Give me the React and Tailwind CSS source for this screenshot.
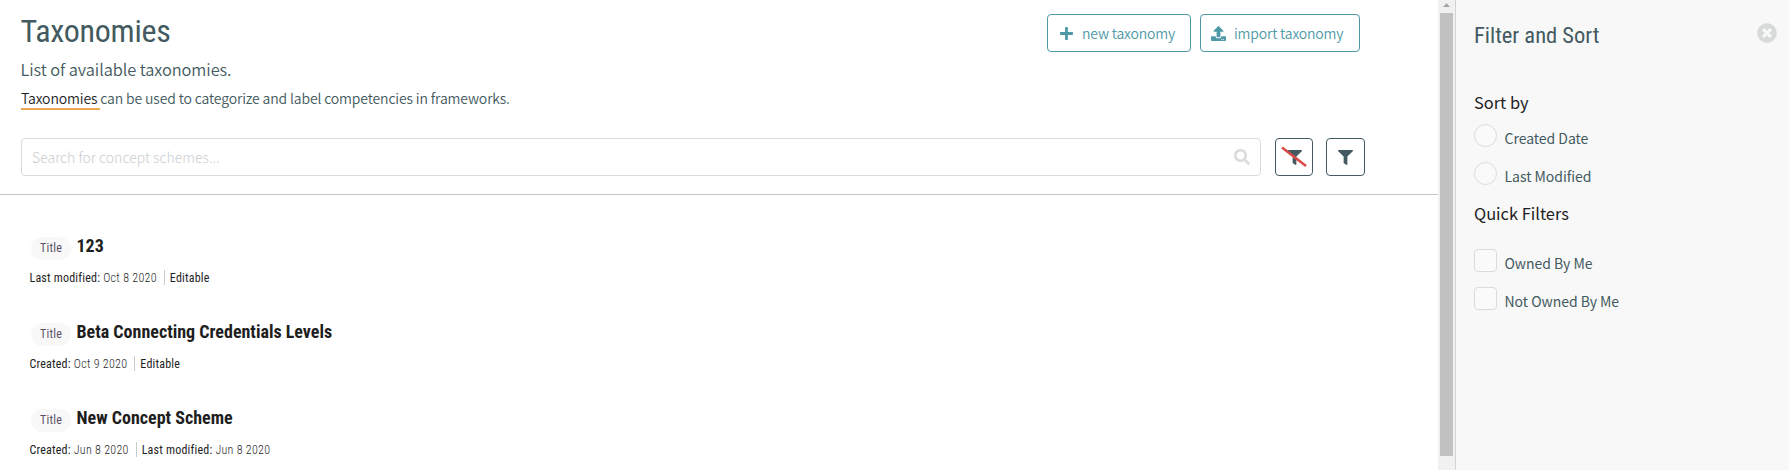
import { FaPlus, FaUpload, FaSearch, FaFilter, FaTimesCircle } from "react-icons/fa";

const SANS = "font-['Source_Sans_Pro','Noto_Sans_CJK_SC',sans-serif]";
const COND = "font-['Roboto_Condensed','Roboto',sans-serif] font-stretch-75%";

const items = [
  { title: "123", meta: [["Last modified:", "Oct 8 2020"], ["Editable"]] },
  { title: "Beta Connecting Credentials Levels", meta: [["Created:", "Oct 9 2020"], ["Editable"]] },
  { title: "New Concept Scheme", meta: [["Created:", "Jun 8 2020"], ["Last modified:", "Jun 8 2020"]] },
];

function OutlineButton({ icon, label, className }) {
  return (
    <button className={`flex h-[38px] items-center rounded border border-[#4e99a6] text-[#4e99a6] ${className}`}>
      {icon}
      <span className="whitespace-nowrap text-[14px] font-[350] leading-none tracking-[-0.17px]">{label}</span>
    </button>
  );
}

function Item({ title, meta }) {
  return (
    <li className="h-[86px]">
      <div className="flex h-6 items-center">
        <span className="ml-px flex h-[23px] w-10 items-center justify-center rounded-full bg-[#f8f8f8] text-[12px] font-normal tracking-[0.2px] text-[#5c5068]">Title</span>
        <h3 className="-mt-1 ml-[5.5px] text-[18px] font-bold leading-6 text-[#1e1e1e]">{title}</h3>
      </div>
      <div className="-ml-[0.5px] mt-[10px] flex h-[15px] items-center text-[12px] leading-none tracking-[0.2px] text-[#1e1e1e]">
        {meta.map(([label, value], i) => (
          <span key={i} className={`flex h-[15px] items-center gap-[3px] ${i ? "ml-[7px] border-l border-[#c5cccd] pl-[5px]" : ""}`}>
            <span>{label}</span>
            {value && <span className="font-light tracking-[0.3px] text-[#2a2a2a]">{value}</span>}
          </span>
        ))}
      </div>
    </li>
  );
}

function Option({ label, round }) {
  return (
    <label className="flex h-[38px] items-start gap-2">
      <span className={`size-[23px] shrink-0 border border-[#dbdbdb] bg-[#fafafa] ${round ? "rounded-full" : "rounded"}`} />
      <span className="-ml-[0.5px] mt-[6px] text-[14px] leading-4 tracking-[-0.03px] text-[#435a60]">{label}</span>
    </label>
  );
}

export default function App() {
  return (
    <div className={`flex h-[470px] w-[1789px] overflow-hidden bg-white ${SANS}`}>
      <main className="w-[1438px] shrink-0">
        <header className="h-[195px] border-b border-[#bfc9ca] pl-[21px]">
          <div className="flex h-[138px]">
            <div className="w-[1026px] text-[#435a60]">
              <h1 className={`-ml-[0.5px] pt-[11px] text-[32px] font-normal leading-10 tracking-[-0.25px] ${COND}`}>Taxonomies</h1>
              <p className="-ml-[0.5px] mt-[6px] text-[16.4px] font-[350] leading-6 tracking-[-0.08px]">List of available taxonomies.</p>
              <p className="mt-[6px] text-[14px] font-[350] leading-[22px] tracking-[-0.14px]">
                <span className="inline-block whitespace-pre border-b-2 border-[#f0a850] leading-5 text-[#1e1e1e]">Taxonomies </span>
                can be used to categorize and label competencies in frameworks.
              </p>
            </div>
            <div className="flex gap-[9px] pt-[14px]">
              <OutlineButton className="w-[144px] pl-[11px]" icon={<FaPlus className="mr-2 size-[15px]" />} label="new taxonomy" />
              <OutlineButton className="w-[160px] pl-[10px]" icon={<FaUpload className="mr-2 size-[15px]" />} label="import taxonomy" />
            </div>
          </div>
          <div className="flex">
            <div className="flex h-[38px] w-[1240px] items-center justify-between rounded border border-[#dbdbdb] pl-[10px] pr-[10px]">
              <span className="text-[14px] font-light leading-none tracking-[0.03px] text-[#c9ced0]">Search for concept schemes...</span>
              <FaSearch className="size-4 text-[#dbdbdb]" />
            </div>
            <button className="relative ml-[14px] flex h-[38px] w-[38px] items-center justify-center rounded border border-[#435a60] text-[#435a60]">
              <FaFilter className="size-[15px]" />
              <svg className="absolute left-[4px] top-[7px] h-[22px] w-[28px]" viewBox="0 0 28 22">
                <path d="M2 1.5 26 20" stroke="#d94a46" strokeWidth="2.5" />
              </svg>
            </button>
            <button className="ml-[13px] flex h-[38px] w-[39px] items-center justify-center rounded border border-[#435a60] text-[#435a60]">
              <FaFilter className="size-[15px]" />
            </button>
          </div>
        </header>
        <ul className={`pl-[30px] pt-[41px] ${COND}`}>
          {items.map((it) => <Item key={it.title} {...it} />)}
        </ul>
      </main>
      <div className="flex w-[17px] shrink-0 flex-col items-center bg-[#f1f1f1]">
        <svg className="h-[13px] w-[7px]" viewBox="0 0 7 13"><path d="M0 7 3.5 3.3 7 7Z" fill="#a3a3a3" /></svg>
        <div className="h-[443px] w-[13px] bg-[#c1c1c1]" />
      </div>
      <aside className="flex-1 border-l border-[#d3d3d3] bg-[#f8f8f8] pl-[18px] pr-3">
        <div className="flex h-[88px] justify-between pt-[23px]">
          <h2 className={`-mt-0.5 text-[22.5px] font-normal leading-7 text-[#435a60] ${COND}`}>Filter and Sort</h2>
          <FaTimesCircle className="size-5 text-[#d6dada]" />
        </div>
        <h3 className="h-9 pt-[2px] text-[16.4px] font-normal leading-6 text-[#1e1e1e]">Sort by</h3>
        <Option round label="Created Date" />
        <Option round label="Last Modified" />
        <h3 className="h-[49px] pt-px text-[16.4px] font-normal leading-6 text-[#1e1e1e]">Quick Filters</h3>
        <Option label="Owned By Me" />
        <Option label="Not Owned By Me" />
      </aside>
    </div>
  );
}
